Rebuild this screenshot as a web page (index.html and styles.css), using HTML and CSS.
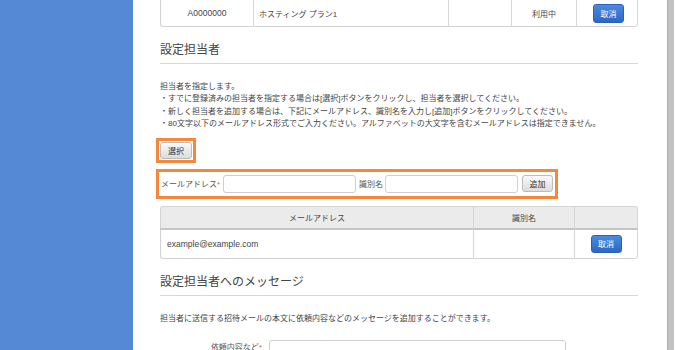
FILE: index.html
```html
<!DOCTYPE html>
<html lang="ja">
<head>
  <meta charset="UTF-8">
  <title>設定担当者</title>
  <link rel="stylesheet" href="styles.css">
</head>
<body>
  <aside class="sidebar"></aside>

  <main class="content">
    <table class="plan-table">
      <tr>
        <td class="c-id">A0000000</td>
        <td class="c-name">ホスティング プラン1</td>
        <td class="c-blank"></td>
        <td class="c-status">利用中</td>
        <td class="c-action"><button class="btn-blue">取消</button></td>
      </tr>
    </table>

    <h2 class="section-title">設定担当者</h2>
    <div class="desc">
      担当者を指定します。<br>
      ・すでに登録済みの担当者を指定する場合は[選択]ボタンをクリックし、担当者を選択してください。<br>
      ・新しく担当者を追加する場合は、下記にメールアドレス、識別名を入力し[追加]ボタンをクリックしてください。<br>
      ・80文字以下のメールアドレス形式でご入力ください。アルファベットの大文字を含むメールアドレスは指定できません。
    </div>

    <div class="select-row">
      <button class="btn-gray">選択</button>
    </div>

    <div class="add-row">
      <label class="lbl-mail">メールアドレス<span class="req">*</span></label>
      <input type="text" class="inp">
      <label class="lbl-name">識別名</label>
      <input type="text" class="inp">
      <button class="btn-gray btn-add">追加</button>
    </div>

    <table class="staff-table">
      <thead>
        <tr>
          <th class="s-mail">メールアドレス</th>
          <th class="s-name">識別名</th>
          <th class="s-action"></th>
        </tr>
      </thead>
      <tbody>
        <tr>
          <td class="s-mail">example@example.com</td>
          <td></td>
          <td class="s-action"><button class="btn-blue">取消</button></td>
        </tr>
      </tbody>
    </table>

    <h2 class="section-title">設定担当者へのメッセージ</h2>
    <div class="desc">担当者に送信する招待メールの本文に依頼内容などのメッセージを追加することができます。</div>

    <div class="msg-row">
      <label class="lbl-msg">依頼内容など<span class="req">*</span></label>
      <textarea class="msg-input"></textarea>
    </div>
  </main>

  <div class="scroll-edge"></div>
  <div class="page-edge"></div>
</body>
</html>
```

FILE: styles.css
```css
html, body {
  margin: 0;
  padding: 0;
  height: 350px;
  overflow: hidden;
}

body {
  display: flex;
  font-family: 'Liberation Sans', 'Noto Sans CJK JP', sans-serif;
  font-size: 8px;
  color: #444;
  background: #fff;
}

.sidebar {
  width: 133px;
  flex: none;
  background-color: #5589d6;
}

.content {
  width: 478px;
  flex: none;
  padding: 0 29px 0 27px;
}

.scroll-edge {
  width: 7px;
  flex: none;
  background: #c2c2c2;
  border-left: 1px solid #b0b0b0;
  box-sizing: border-box;
}

.page-edge {
  flex: 1;
}

/* tables */
table {
  width: 100%;
  border-collapse: separate;
  border-spacing: 0;
}

.plan-table td {
  height: 27px;
  border-right: 1px solid #d8d8d8;
  border-bottom: 1px solid #d2d2d2;
  padding: 0;
  box-sizing: border-box;
}

.plan-table td:first-child {
  border-left: 1px solid #d2d2d2;
  border-bottom-left-radius: 3px;
}

.plan-table td:last-child {
  border-bottom-right-radius: 3px;
}

.c-id { width: 94px; text-align: center; font-size: 8.5px; }
.c-name { width: 195px; padding-left: 5px !important; }
.c-blank { width: 63px; }
.c-status { width: 65px; text-align: center; }
.c-action { text-align: center; }

.staff-table {
  margin-top: 7px;
}

.staff-table th {
  height: 24px;
  background: #ebebeb;
  font-weight: normal;
  border-top: 1px solid #d6d6d6;
  border-right: 1px solid #d6d6d6;
  border-bottom: 2px solid #c4c4c4;
  box-sizing: border-box;
}

.staff-table td {
  height: 29px;
  border-right: 1px solid #d6d6d6;
  border-bottom: 1px solid #d2d2d2;
  box-sizing: border-box;
}

.staff-table th:first-child,
.staff-table td:first-child {
  border-left: 1px solid #d2d2d2;
}

.staff-table th:first-child { border-top-left-radius: 3px; }
.staff-table th:last-child { border-top-right-radius: 3px; }
.staff-table tr:last-child td:first-child { border-bottom-left-radius: 3px; }
.staff-table tr:last-child td:last-child { border-bottom-right-radius: 3px; }

.staff-table .s-mail { width: 314px; }
.staff-table td.s-mail { padding-left: 6px; font-size: 8.5px; }
.staff-table .s-name { width: 101px; }
.staff-table .s-action { text-align: center; }

/* buttons */
button {
  font-family: inherit;
  font-size: 8px;
  padding: 0;
  cursor: pointer;
}

.btn-blue {
  width: 31px;
  height: 18px;
  color: #fff;
  border: 1px solid #2b62b8;
  border-radius: 3px;
  background: linear-gradient(#4a8be0, #2c67c4);
}

.plan-table .btn-blue {
  margin-left: 3px;
  height: 19px;
}

.btn-gray {
  height: 18px;
  color: #333;
  border: 1px solid #bcbcbc;
  border-radius: 3px;
  background: linear-gradient(#fafafa, #dcdcdc);
}

/* sections */
.section-title {
  margin: 15px 0 0;
  padding-bottom: 5px;
  font-size: 12px;
  line-height: 16px;
  font-weight: normal;
  color: #444;
  border-bottom: 1px solid #d8d8d8;
}

.desc {
  margin-top: 17px;
  line-height: 12.4px;
}

/* orange highlight boxes */
.select-row {
  display: flex;
  width: fit-content;
  margin: 7px 0 0 -4px;
  padding: 1px;
  border: 3px solid #f5883c;
}

.select-row .btn-gray {
  width: 32px;
  height: 17px;
}

.add-row {
  margin: 6px 0 0 -4px;
  width: 394px;
  height: 22px;
  padding: 1px;
  border: 3px solid #f5883c;
  display: flex;
  align-items: center;
}

.add-row label {
  color: #555;
}

.lbl-mail {
  padding-left: 1px;
  width: 62px;
}

.lbl-name {
  width: 26px;
  margin-left: 3px;
}

.req {
  color: #e05a5a;
}

.inp {
  width: 133px;
  height: 18px;
  padding: 0;
  border: 1px solid #cfcfcf;
  border-radius: 3px;
  box-sizing: border-box;
  font-size: 8px;
}

.btn-add {
  width: 31px;
  margin-left: 4px;
  height: 17px;
}

.msg-row {
  margin-top: 15px;
  display: flex;
  align-items: flex-start;
}

.lbl-msg {
  width: 102px;
  text-align: right;
  padding-top: 1px;
  color: #555;
}

.msg-input {
  margin-left: 7px;
  width: 297px;
  height: 40px;
  border: 1px solid #cfcfcf;
  border-radius: 3px;
  box-sizing: border-box;
  resize: none;
}
```
